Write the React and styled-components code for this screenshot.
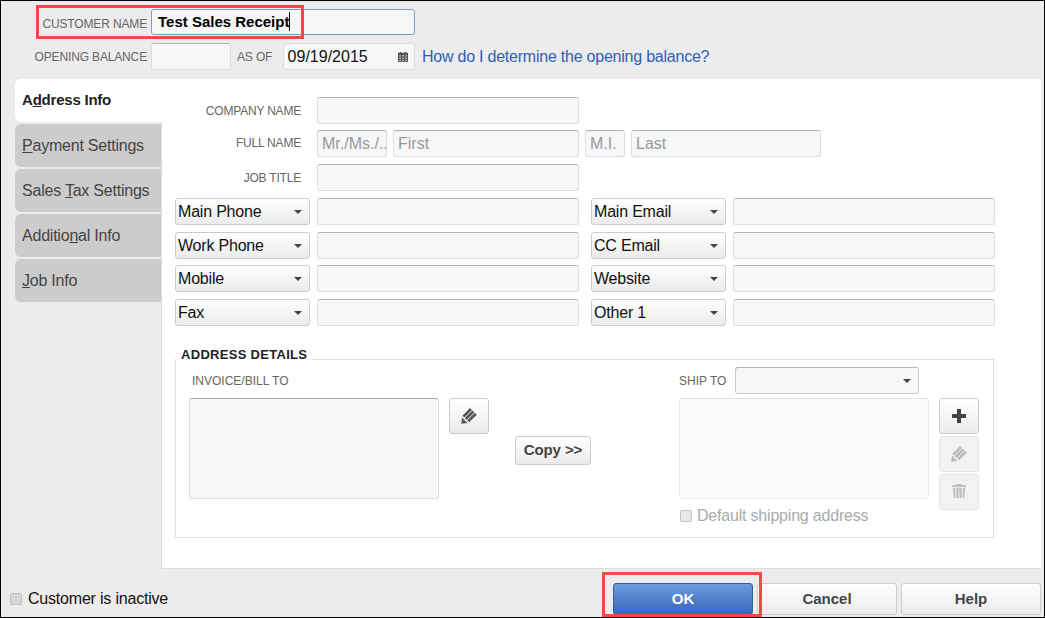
import React from 'react';
import styled, { createGlobalStyle } from 'styled-components';

const Global = createGlobalStyle`
  * { box-sizing: border-box; }
  body {
    margin: 0;
    font-family: "Liberation Sans", Arial, sans-serif;
  }
`

const Frame = styled.div`
  width: 1045px;
  height: 618px;
  border: 1px solid #000;
  background: #ececec;
  display: flex;
  flex-direction: column;
  overflow: hidden;
`

const TopForm = styled.div`
  padding-top: 8px;
  display: flex;
  flex-direction: column;
  gap: 8px;
`

const TopRow = styled.div`
  position: relative;
  display: flex;
  align-items: center;
  height: ${(p) => p.$height}px;
`

const TopLabel = styled.span`
  width: ${(p) => p.$width || 146}px;
  margin-left: ${(p) => p.$left || 0}px;
  margin-right: 4px;
  padding-top: ${(p) => p.$drop || 1}px;
  font-size: 12px;
  letter-spacing: -.15px;
  color: #666;
  text-align: ${(p) => p.$align || 'right'};
  white-space: nowrap;
`

const RedBox = styled.div`
  position: absolute;
  border: 3px solid #ee4b45;
  pointer-events: none;
  left: ${(p) => p.$left}px;
  top: ${(p) => p.$top}px;
  width: ${(p) => p.$width}px;
  height: ${(p) => p.$height}px;
`

const NameBox = styled.div`
  width: 264px;
  height: 26px;
  border: 1px solid #7d9bd0;
  border-radius: 3px;
  background: #f7f7f7;
  padding: 0 0 2px 6px;
  display: flex;
  align-items: center;
  font-size: 15px;
  font-weight: bold;
  color: #000;
`

const Caret = styled.span`
  border-right: 1px solid #000;
  line-height: 19px;
`

const Input = styled.input`
  display: block;
  width: ${(p) => (p.$width ? p.$width + 'px' : '100%')};
  height: ${(p) => p.$height || 27}px;
  margin: 0;
  padding: 1px 0 0 4px;
  border: 1px solid #ddd;
  border-top-color: #b4b4b4;
  border-radius: 3px;
  background: #f7f7f7;
  font: 16px "Liberation Sans", Arial, sans-serif;
  color: #111;
  outline: none;
  &::placeholder { color: #999; opacity: 1; }
`

const DateBox = styled.div`
  width: 132px;
  height: 27px;
  margin-left: 8px;
  padding: 0 6px 0 3.6px;
  border: 1px solid #ddd;
  border-radius: 3px;
  background: #f7f7f7;
  display: flex;
  align-items: center;
  justify-content: space-between;
  font-size: 16px;
  color: #111;
`

const HelpLink = styled.a`
  margin-left: 7px;
  font-size: 16px;
  letter-spacing: -.23px;
  color: #2f5fb8;
`

const Main = styled.div`
  margin: 9px 3px 0 14px;
  height: 490px;
  display: flex;
`

const Tabs = styled.div`
  width: 146px;
  flex: none;
  display: flex;
  flex-direction: column;
  gap: 2px;
  position: relative;
  z-index: 1;
`

const Tab = styled.div`
  height: 43px;
  padding: 0 0 ${(p) => (p.$active ? 2 : 0)}px 7px;
  display: flex;
  align-items: center;
  border-radius: 6px 0 0 6px;
  background: ${(p) => (p.$active ? '#fff' : '#ccc')};
  color: ${(p) => (p.$active ? '#222' : '#444')};
  font-size: ${(p) => (p.$active ? 15 : 16)}px;
  font-weight: ${(p) => (p.$active ? 'bold' : 'normal')};
  letter-spacing: -.22px;
  margin-right: ${(p) => (p.$active ? -1 : 0)}px;
  span { white-space: pre; }
`

const Panel = styled.div`
  flex: 1;
  background: #fff;
  border-left: 1px solid #ddd;
  border-bottom: 1px solid #ddd;
  padding: 18px 0 0 13px;
`

const Rows = styled.div`
  display: flex;
  flex-direction: column;
  gap: 6.67px;
`

const LabeledRow = styled.div`
  display: flex;
  align-items: center;
  height: 27px;
  margin: ${(p) => (p.$raised ? '-.7px 0 .7px' : '0')};
`

const RowLabel = styled.span`
  width: 126px;
  margin-right: 16px;
  font-size: 12px;
  letter-spacing: -.2px;
  color: #666;
  text-align: right;
`

const NameParts = styled.div`
  display: flex;
  gap: 6px;
`

const PhoneRow = styled.div`
  display: grid;
  grid-template-columns: 135px 262px 140px 262px;
  column-gap: 7px;
  height: 27px;
  & > :nth-child(3) { margin-left: 5px; }
`

const Dropdown = styled.div`
  height: 27px;
  width: ${(p) => (p.$width ? p.$width + 'px' : 'auto')};
  padding: 1px 7px 0 2px;
  border: 1px solid #ccc;
  border-top-color: ${(p) => (p.$flat ? '#b4b4b4' : '#ccc')};
  border-radius: 3px;
  background: ${(p) => (p.$flat ? '#f7f7f7' : 'linear-gradient(#fff, #ebebeb)')};
  display: flex;
  align-items: center;
  justify-content: space-between;
  font-size: 16px;
  letter-spacing: -.2px;
  color: #111;
`

const Arrow = styled.span`
  margin-left: auto;
  width: 0;
  height: 0;
  border-left: 4px solid transparent;
  border-right: 4px solid transparent;
  border-top: 4px solid #444;
`

const Details = styled.div`
  position: relative;
  width: 819px;
  height: 179px;
  margin-top: 33px;
  border: 1px solid #e0e0e0;
  padding: 7px 0 0 13px;
  display: flex;
  align-items: flex-start;
`

const DetailsTitle = styled.div`
  position: absolute;
  left: 0;
  top: -13px;
  padding: 0 4px 0 5px;
  background: #fff;
  font-size: 13px;
  line-height: 16px;
  font-weight: bold;
  color: #222;
  letter-spacing: .3px;
`

const Column = styled.div`
  display: flex;
  flex-direction: column;
`

const Head = styled.div`
  height: 27px;
  margin-bottom: 4px;
  display: flex;
  align-items: center;
  font-size: 12px;
  color: #666;
  padding-left: ${(p) => p.$indent || 0}px;
  & > span, &:not(:has(span)) { padding-top: 1px; }
`

const ShipLabel = styled.span`
  width: 56px;
`

const Memo = styled.div`
  width: 250px;
  height: 101px;
  border: 1px solid ${(p) => (p.$light ? '#eee' : '#ddd')};
  border-top-color: ${(p) => (p.$light ? '#e2e2e2' : '#aaa')};
  border-radius: 3px;
  background: ${(p) => (p.$light ? '#fbfbfb' : '#f7f7f7')};
`

const IconButton = styled.div`
  width: 40px;
  height: 36px;
  margin-left: ${(p) => p.$left || 0}px;
  margin-top: ${(p) => p.$top || 0}px;
  border: 1px solid ${(p) => (p.$off ? '#e6e6e6' : '#ccc')};
  border-radius: 3px;
  background: ${(p) => (p.$off ? '#f2f2f2' : 'linear-gradient(#fff, #ebebeb)')};
  display: flex;
  align-items: center;
  justify-content: center;
`

const CopyButton = styled.div`
  width: 76px;
  height: 29px;
  margin: 69px 0 0 26px;
  padding-bottom: 1px;
  border: 1px solid #ccc;
  border-radius: 3px;
  background: linear-gradient(#fff, #ebebeb);
  display: flex;
  align-items: center;
  justify-content: center;
  font-size: 15px;
  font-weight: bold;
  letter-spacing: -.1px;
  color: #444;
`

const ShipArea = styled.div`
  margin-left: 88px;
  display: flex;
  flex-direction: column;
`

const ShipBody = styled.div`
  display: flex;
  gap: 10px;
`

const ButtonStack = styled.div`
  display: flex;
  flex-direction: column;
  gap: 2px;
`

const CheckRow = styled.div`
  display: flex;
  align-items: center;
  height: 16px;
  margin-top: ${(p) => p.$top || 0}px;
  padding-left: ${(p) => p.$indent || 0}px;
  font-size: 16px;
  letter-spacing: -.2px;
  color: ${(p) => (p.$muted ? '#aaa' : '#111')};
`

const Box = styled.span`
  width: 12px;
  height: 12px;
  margin-right: ${(p) => p.$gap}px;
  border: 1px solid #c0c0c0;
  border-radius: 2px;
  background: ${(p) => (p.$muted ? '#e8e8e8' : '#d8d8d8')};
`

const Footer = styled.div`
  flex: 1;
  padding: 14px 3px 0 9px;
  display: flex;
  align-items: flex-start;
`

const FooterButtons = styled.div`
  margin-left: auto;
  display: flex;
  gap: 4px;
`

const ActionWrap = styled.div`
  position: relative;
`

const Action = styled.div`
  width: 140px;
  height: 32px;
  padding-bottom: 2px;
  border: 1px solid ${(p) => (p.$primary ? '#3a5c9e' : '#ccc')};
  border-radius: 3px;
  background: ${(p) => (p.$primary ? 'linear-gradient(#6b9bdf, #3c65bc)' : 'linear-gradient(#fff, #ebebeb)')};
  color: ${(p) => (p.$primary ? '#fff' : '#444')};
  display: flex;
  align-items: center;
  justify-content: center;
  font-size: 15px;
  font-weight: bold;
`

const CalendarIcon = () => (
  <svg width="10" height="10" viewBox="0 0 12 12">
    <path fill="#555" d="M0 1h2V0h2v1h4V0h2v1h2v11H0z" />
    <path fill="#ccc" d="M1.5 4h2v1.5h-2zM5 4h2v1.5H5zM8.5 4h2v1.5h-2zM1.5 7h2v1.5h-2zM5 7h2v1.5H5zM8.5 7h2v1.5h-2zM1.5 9.5h2V11h-2zM5 9.5h2V11H5zM8.5 9.5h2V11h-2z" />
  </svg>
)

const PencilIcon = ({ color }) => (
  <svg width="16" height="16" viewBox="0 0 16 16">
    <path fill={color} d="M0.2 15.8L1.1 9.6L6.4 14.9z" />
    <path stroke={color} strokeWidth="2.7" fill="none" d="M2.4 8.6L10 1M4.8 11L12.4 3.4M7.2 13.4L14.8 5.8" />
  </svg>
)

const PlusIcon = () => (
  <svg width="14" height="14" viewBox="0 0 14 14">
    <path fill="#444" d="M5 0h4v5h5v4H9v5H5V9H0V5h5z" />
  </svg>
)

const TrashIcon = ({ color }) => (
  <svg width="14" height="15" viewBox="0 0 15 16">
    <path fill={color} d="M5 0h5v1h5v2H0V1h5z" />
    <path fill={color} d="M1 4h2.2l.6 11H2zM4.4 4h1.8l.3 11H4.9zM8.8 4h1.8l-.5 11H8.5zM11.8 4H14l-1 11h-1.8zM6.8 4h1.4L8 15H7z" />
  </svg>
)

const phoneRows = [
  ['Main Phone', 'Main Email'],
  ['Work Phone', 'CC Email'],
  ['Mobile', 'Website'],
  ['Fax', 'Other 1'],
];

const App = () => {
  return (
    <Frame>
      <Global />
      <TopForm>
        <TopRow $height={26}>
          <RedBox $left={35} $top={-4} $width={268} $height={34} />
          <TopLabel $drop={3}>CUSTOMER NAME</TopLabel>
          <NameBox><Caret>Test Sales Receipt</Caret></NameBox>
        </TopRow>
        <TopRow $height={27}>
          <TopLabel>OPENING BALANCE</TopLabel>
          <Input $width={80} readOnly />
          <TopLabel $width={34} $left={6} $align="left">AS OF</TopLabel>
          <DateBox>09/19/2015<CalendarIcon /></DateBox>
          <HelpLink>How do I determine the opening balance?</HelpLink>
        </TopRow>
      </TopForm>
      <Main>
        <Tabs>
          <Tab $active><span>A<u>d</u>dress Info</span></Tab>
          <Tab><span><u>P</u>ayment Settings</span></Tab>
          <Tab><span>Sales <u>T</u>ax Settings</span></Tab>
          <Tab><span>Additio<u>n</u>al Info</span></Tab>
          <Tab><span><u>J</u>ob Info</span></Tab>
        </Tabs>
        <Panel>
          <Rows>
            <LabeledRow>
              <RowLabel>COMPANY NAME</RowLabel>
              <Input $width={262} readOnly />
            </LabeledRow>
            <LabeledRow $raised>
              <RowLabel>FULL NAME</RowLabel>
              <NameParts>
                <Input $width={70} placeholder="Mr./Ms./.." readOnly />
                <Input $width={186} placeholder="First" readOnly />
                <Input $width={40} placeholder="M.I." readOnly />
                <Input $width={190} placeholder="Last" readOnly />
              </NameParts>
            </LabeledRow>
            <LabeledRow>
              <RowLabel>JOB TITLE</RowLabel>
              <Input $width={262} readOnly />
            </LabeledRow>
            {phoneRows.map((row) => (
              <PhoneRow key={row[0]}>
                <Dropdown>{row[0]}<Arrow /></Dropdown>
                <Input readOnly />
                <Dropdown>{row[1]}<Arrow /></Dropdown>
                <Input readOnly />
              </PhoneRow>
            ))}
          </Rows>
          <Details>
            <DetailsTitle>ADDRESS DETAILS</DetailsTitle>
            <Column>
              <Head $indent={3}>INVOICE/BILL TO</Head>
              <Memo />
            </Column>
            <IconButton $left={10} $top={31}><PencilIcon color="#555" /></IconButton>
            <CopyButton>Copy &gt;&gt;</CopyButton>
            <ShipArea>
              <Head>
                <ShipLabel>SHIP TO</ShipLabel>
                <Dropdown $flat $width={184}><Arrow /></Dropdown>
              </Head>
              <ShipBody>
                <Column>
                  <Memo $light />
                  <CheckRow $muted $top={9} $indent={1}>
                    <Box $muted $gap={5} />Default shipping address
                  </CheckRow>
                </Column>
                <ButtonStack>
                  <IconButton><PlusIcon /></IconButton>
                  <IconButton $off><PencilIcon color="#bbb" /></IconButton>
                  <IconButton $off><TrashIcon color="#bbb" /></IconButton>
                </ButtonStack>
              </ShipBody>
            </ShipArea>
          </Details>
        </Panel>
      </Main>
      <Footer>
        <CheckRow $top={8}>
          <Box $gap={6} />Customer is inactive
        </CheckRow>
        <FooterButtons>
          <ActionWrap>
            <RedBox $left={-11} $top={-11} $width={160} $height={45} />
            <Action $primary>OK</Action>
          </ActionWrap>
          <Action>Cancel</Action>
          <Action>Help</Action>
        </FooterButtons>
      </Footer>
    </Frame>
  )
}

export default App;
